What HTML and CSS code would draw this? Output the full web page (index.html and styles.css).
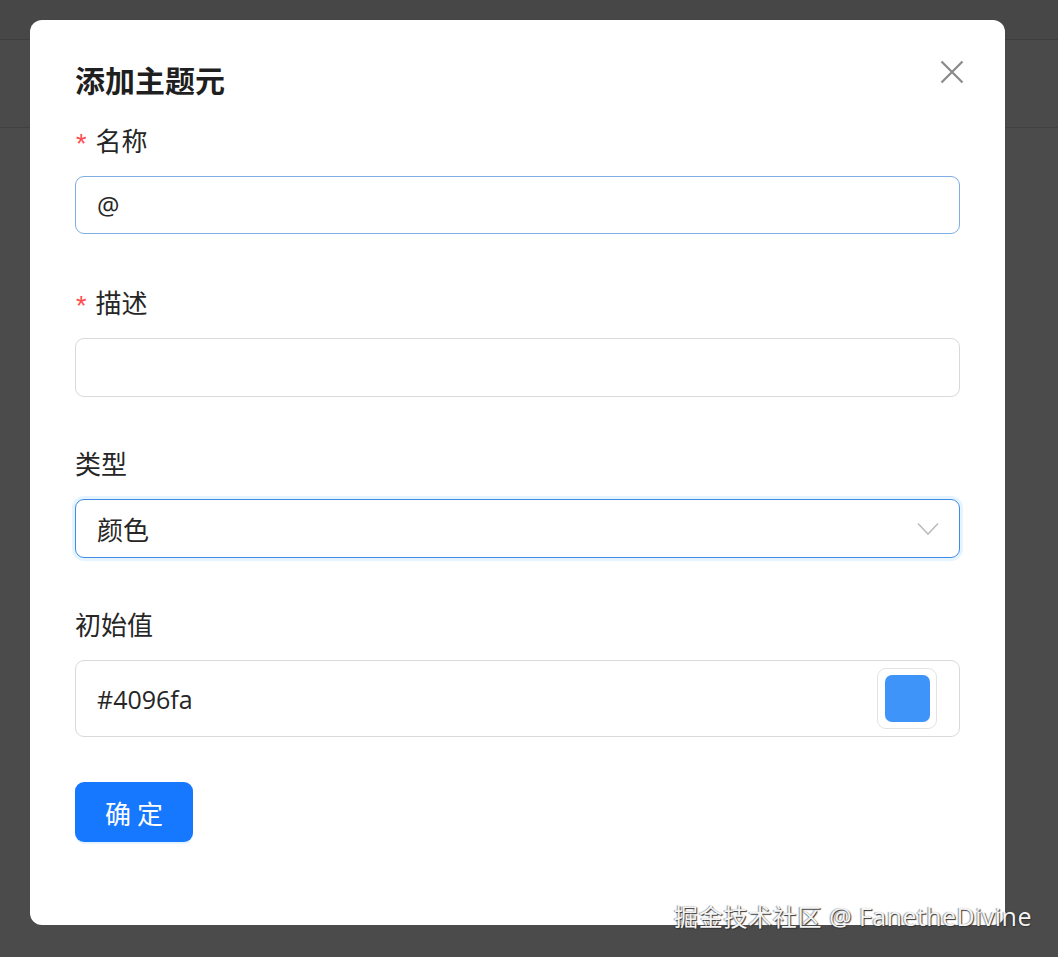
FILE: index.html
```html
<!DOCTYPE html>
<html lang="zh-CN">
<head>
<meta charset="utf-8">
<title>添加主题元</title>
<link rel="stylesheet" href="styles.css">
</head>
<body>
<div class="page">
  <div class="page-top"></div>
  <div class="page-band"></div>
  <div class="page-rest"></div>
</div>

<div class="dialog">
  <div class="dialog-head">
    <h2 class="dialog-title">添加主题元</h2>
    <button class="close" aria-label="关闭">
      <svg width="24" height="24" viewBox="0 0 24 24"><path d="M1.5 1.5 L22.5 22.5 M22.5 1.5 L1.5 22.5" stroke="#8a8a8a" stroke-width="2.2" fill="none"/></svg>
    </button>
  </div>
  <form class="form">
    <div class="item">
      <label class="label"><span class="req">*</span>名称</label>
      <div class="field field-focus h58"><span class="value">@</span></div>
    </div>
    <div class="item item-tight">
      <label class="label"><span class="req">*</span>描述</label>
      <div class="field h59"></div>
    </div>
    <div class="item item-tight">
      <label class="label">类型</label>
      <div class="field field-select h59">
        <span class="value">颜色</span>
        <svg class="chev" width="22" height="14" viewBox="0 0 22 14"><path d="M1 1.5 L11 12 L21 1.5" stroke="#bdbdbd" stroke-width="1.6" fill="none"/></svg>
      </div>
    </div>
    <div class="item item-last">
      <label class="label">初始值</label>
      <div class="field h77">
        <span class="value">#4096fa</span>
        <span class="swatch"><span class="swatch-fill"></span></span>
      </div>
    </div>
    <button type="button" class="btn">确 定</button>
  </form>
</div>

<div class="watermark"><span class="wm-cjk">掘金技术社区</span><span class="wm-latin"> @ FanetheDivine</span></div>
</body>
</html>
```
FILE: styles.css
```css
* { box-sizing: border-box; }
html, body { margin: 0; padding: 0; }
body {
  width: 1058px;
  height: 957px;
  overflow: hidden;
  background: #4a4a4a;
  font-family: "Open Sans", "Noto Sans CJK SC", sans-serif;
  position: relative;
}
.page { display: flex; flex-direction: column; height: 957px; }
.page-top { height: 40px; background: #474747; border-bottom: 1px solid #3e3e3e; }
.page-band { height: 88px; background: #4a4a4a; border-bottom: 1px solid #404040; }
.page-rest { flex: 1; background: #4b4b4b; }

.dialog {
  position: absolute;
  left: 30px;
  top: 20px;
  width: 975px;
  height: 905px;
  background: #fff;
  border-radius: 12px;
  padding: 39px 45px 0 45px;
}
.dialog-head {
  display: flex;
  justify-content: space-between;
  align-items: flex-start;
  height: 40px;
}
.dialog-title {
  margin: 0;
  font-family: "Noto Sans CJK SC", sans-serif;
  font-size: 30px;
  font-weight: 700;
  line-height: 40px;
  color: #1f1f1f;
}
.close {
  border: 0;
  background: none;
  padding: 0;
  margin: 1px -4px 0 0;
  width: 24px;
  height: 24px;
  cursor: pointer;
}
.close svg { display: block; }

.form { display: flex; flex-direction: column; margin-top: 24px; }
.item { display: flex; flex-direction: column; margin-bottom: 51px; }
.item-tight { margin-bottom: 49px; }
.item-last { margin-bottom: 45px; }
.label {
  height: 36px;
  padding-bottom: 3px;
  line-height: 32px;
  font-family: "Noto Sans CJK SC", sans-serif;
  font-size: 26px;
  color: #262626;
  margin-bottom: 17px;
  display: flex;
  align-items: center;
}
.req {
  color: #ff4d4f;
  font-size: 27px;
  margin-left: 1px;
  margin-right: 9px;
  margin-top: 8px;
  font-family: "Liberation Sans", sans-serif;
}
.field {
  width: 885px;
  border: 1px solid #d9d9d9;
  border-radius: 9px;
  display: flex;
  align-items: center;
  padding: 0 21px;
  background: #fff;
}
.h58 { height: 58px; }
.h59 { height: 59px; }
.h77 { height: 77px; justify-content: space-between; }
.field-focus { border-color: #7eaee3; }
.field-select {
  border-color: #3f8be6;
  box-shadow: 0 0 0 3px rgba(5, 145, 255, 0.1);
  justify-content: space-between;
}
.value {
  font-size: 25px;
  color: #262626;
  font-family: "Open Sans", "Noto Sans CJK SC", sans-serif;
}
.field-select .value { font-family: "Noto Sans CJK SC", sans-serif; font-size: 26px; }
.chev { display: block; margin-right: -1px; }
.swatch {
  width: 60px;
  height: 61px;
  border: 1px solid #e3e3e3;
  border-radius: 9px;
  padding: 6px 6px 6px 7px;
  margin-right: 1px;
  display: flex;
}
.swatch-fill {
  flex: 1;
  background: #3f94f9;
  border-radius: 7px;
}
.btn {
  align-self: flex-start;
  width: 118px;
  height: 60px;
  border: 0;
  border-radius: 9px;
  background: #1677ff;
  color: #fff;
  font-family: "Noto Sans CJK SC", sans-serif;
  font-size: 26px;
  box-shadow: 0 2px 0 rgba(5, 145, 255, 0.1);
  cursor: pointer;
  padding: 0;
}

.watermark {
  position: absolute;
  left: 674px;
  top: 899px;
  line-height: 34px;
  color: #f4f4f4;
  text-shadow: 1px 1px 1px #333, -1px 0 1px rgba(0,0,0,0.4);
  white-space: nowrap;
}
.wm-cjk {
  font-family: "Noto Sans CJK SC", sans-serif;
  font-size: 24px;
  letter-spacing: 0.7px;
}
.wm-latin {
  font-family: "Open Sans", sans-serif;
  font-size: 25px;
  letter-spacing: 0.45px;
}
```
